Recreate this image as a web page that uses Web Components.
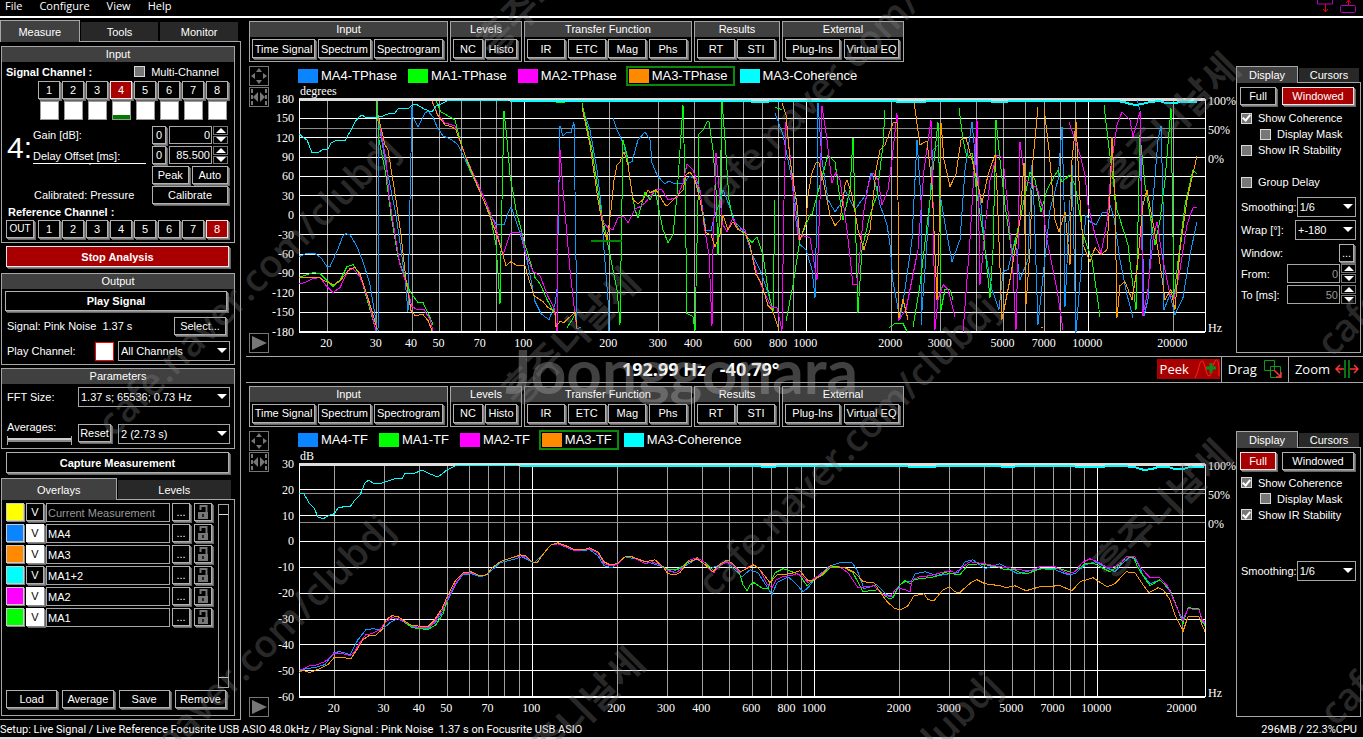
<!DOCTYPE html>
<html lang="en">
<head>
<meta charset="utf-8">
<meta name="viewport" content="width=device-width, initial-scale=1">
<title>Acoustic Analyzer</title>
<style>
html,body{margin:0;background:#000;color:#fff}
body{font:11px/14px "Liberation Sans",Arial,sans-serif;position:relative;--line:#a6a6a6;--red:#a80000}
</style>
</head>
<body>
<analyzer-app></analyzer-app>
<script>
const define = (name, css, html, setup) => {
  const tpl = document.createElement('template');
  tpl.innerHTML = `<style>*{box-sizing:border-box}:host{box-sizing:border-box;white-space:nowrap}${css}</style>${html}`;
  customElements.define(name, class extends HTMLElement {
    constructor() {
      super();
      this.attachShadow({mode: 'open'}).append(tpl.content.cloneNode(true));
    }
    connectedCallback() {
      if (setup && !this.ready) { this.ready = true; setup(this, this.shadowRoot); }
    }
  });
};

/* ---------- small controls ---------- */
define('push-button', `
:host{display:block;height:18px;margin:0}
button{display:flex;align-items:center;justify-content:center;width:100%;height:100%;padding:0;margin:0;font:inherit;color:#fff;background:#000;border:1px solid #b0b0b0;border-radius:0;box-shadow:1px 1px 0 #8a8a8a,2px 2px 0 #666;white-space:nowrap}
:host([on]) button{background:var(--red);border-color:#f4e4e4}
:host([lit]) button{background:#fff;color:#000;border-color:#fff}
:host([strong]) button{font-weight:bold}`,
`<button type="button"><slot></slot></button>`,
(el, root) => { if (el.title) root.querySelector('button').setAttribute('aria-label', el.title); });

define('group-box', `
:host{display:block;border:1px solid var(--line)}
h2{margin:0;height:15px;font:inherit;line-height:15px;text-align:center;background:#404040}`,
`<h2><slot name="title"></slot></h2><slot></slot>`);

define('tab-strip', `
:host{display:flex;align-items:flex-end;position:relative;z-index:1;margin-bottom:-1px}
::slotted(button){flex:1;height:19px;margin:0 1px 1px;padding:0;border:0;background:#282828;color:#fff;font:inherit}
::slotted(button[aria-selected=true]){height:22px;margin:0;background:#404040;border:1px solid var(--line);border-bottom:0}`,
`<slot></slot>`);

define('drop-down', `
:host{display:block;position:relative;height:20px}
::slotted(select){appearance:none;width:100%;height:100%;margin:0;padding:0 0 0 2px;border:1px solid var(--line);border-radius:0;background:#000;color:#fff;font:inherit}
i{position:absolute;right:3px;top:7px;border:5px solid transparent;border-top-color:#fff;border-bottom:0;pointer-events:none}`,
`<slot></slot><i></i>`);

define('spin-box', `
:host{display:flex;gap:1px;height:19px}
::slotted(input){flex:1;width:100%;min-width:0;height:100%;box-sizing:border-box;margin:0;padding:0 1px;border:1px solid var(--line);border-radius:0;background:#000;color:inherit;font:inherit;text-align:right}
div{width:15px;display:grid;grid-template-rows:1fr 1fr;gap:1px;flex:none}
button{display:flex;align-items:center;justify-content:center;padding:0;border:1px solid #777;background:#000}
i{border:5px solid transparent;border-bottom-color:#fff;border-top:0}
button+button i{border:5px solid transparent;border-top-color:#fff;border-bottom:0}`,
`<slot></slot><div><button type="button" aria-label="Up"><i></i></button><button type="button" aria-label="Down"><i></i></button></div>`);

define('check-box', `
:host{display:block;height:16px}
label{display:flex;align-items:center;gap:6px;height:100%}
input{appearance:none;width:11px;height:11px;margin:0;border:1px solid #d8d8d8;background:#777;display:grid;place-items:center}
input:checked::before{content:"";width:3px;height:6px;margin-top:-2px;border:solid #fff;border-width:0 2px 2px 0;transform:rotate(40deg)}`,
`<label><input type="checkbox"><span><slot></slot></span></label>`,
(el, root) => { root.querySelector('input').checked = el.hasAttribute('checked'); });

/* ---------- menu and status ---------- */
define('menu-bar', `
:host{display:block;height:18px;border-bottom:2px solid #fff;font:11px/12px "Open Sans","Noto Sans",sans-serif}
nav{display:flex;justify-content:space-between;padding:0 7px 0 5px}
div{display:flex;gap:17px}
.win{gap:7px}
a{color:#fff;text-decoration:none}
svg{display:block}`,
`<nav><div><a href="#file">File</a><a href="#configure">Configure</a><a href="#view">View</a><a href="#help">Help</a></div>
<div class="win">
<svg width="16" height="14" fill="none"><path d="M.5 0V4H15.500V0" stroke="#b000c0"/><path d="M8.500 4V12M6 9l2.500 3L11 9" stroke="#e00020"/></svg>
<svg width="16" height="14" fill="none"><rect x=".5" y="5.500" width="15" height="7" rx="1" stroke="#b000c0"/><path d="M8.500 5V0M6 3l2.500-3L11 3" stroke="#e00020"/></svg>
</div></nav>`);

define('status-bar', `
:host{display:flex;justify-content:space-between;height:19px;padding:2px 6px 0 0;font:11px/16px Roboto,"Noto Sans",sans-serif;border-bottom:2px solid #ddd}
span{white-space:pre}`,
`<span>Setup: Live Signal / Live Reference Focusrite USB ASIO 48.0kHz / Play Signal : Pink Noise  1.37 s on Focusrite USB ASIO</span><span>296MB / 22.3%CPU</span>`);

/* ---------- overlay list ---------- */
define('overlay-row', `
:host{display:flex;height:19px;gap:2px;min-width:0}
.sw{width:18px;height:18px;background:var(--c);border:1px solid #ccc;box-shadow:1px 1px 0 #888}
.v{width:18px}
.m{width:18px;margin-right:2px}
.l{width:18px}
input{flex:1;width:0;min-width:0;height:19px;border:1px solid var(--line);background:#000;color:#fff;font:inherit;padding:0 1px;margin:0}
:host([dim]) input{color:#999}
svg{display:block}`,
`<span class="sw"></span><push-button class="v">V</push-button><input aria-label="Overlay name"><push-button class="m" title="More">...</push-button><push-button class="l" title="Lock"><svg width="14" height="16" fill="none"><path d="M4.500 6V2h6v6" stroke="#777" stroke-width="2"/><rect x="2" y="8" width="10" height="7" fill="#777"/><path d="M7 10v3" stroke="#222" stroke-width="2"/></svg></push-button>`,
(el, root) => {
  root.querySelector('input').value = el.getAttribute('name');
  root.querySelector('.v').toggleAttribute('lit', el.hasAttribute('shown'));
});

/* ---------- side panel ---------- */
const channels = on => [1,2,3,4,5,6,7,8].map(n => `<push-button class="ch"${n === on ? ' on' : ''}>${n}</push-button>`).join('');
define('side-panel', `
:host{display:flex;flex-direction:column;width:241px;flex:none;padding-top:2px}
.main{flex:1;display:flex;flex-direction:column;border:solid var(--line);border-width:1px 1px 1px 0;padding:4px 5px 3px 1px}
tab-strip.top{padding-right:2px}
.row{display:flex;align-items:center}
.head{height:19px;padding:0 15px 0 4px;justify-content:space-between}
.chans{gap:2px}
.ch{width:22px}
.sig{padding-left:36px}
.meters{gap:5px;padding-left:38px;margin-top:2px}
.meters i{width:19px;height:19px;background:#fff;border:1px solid #999}
.meters i.live{background:linear-gradient(#fff 13px,#007c00 13px)}
.gain{display:grid;grid-template-columns:31px 1fr 76px;grid-auto-rows:18px;gap:2px 0;padding-right:6px;margin-top:6px;align-items:center}
.big{grid-row:1/4;font-size:30px;line-height:36px;padding:0 0 14px 5px}
.set{display:flex;gap:3px;grid-column:3}
.set push-button{flex:1}
.set .z{flex:none;width:14px}
.set spin-box{flex:1;height:18px}
.delay{grid-column:2;width:113px;border-bottom:1px solid #fff;margin-top:2px;position:relative}
.delay::after{content:"";position:absolute;left:55px;top:14px;border:2px solid transparent;border-top-color:#fff}
.cal{grid-column:2;padding-left:1px}
.ref{height:16px;padding:1px 6px 0}
.refs{padding:0 0 4px 4px}
.out{width:28px;margin-right:2px;font-size:10px}
.big-btn{height:21px;margin:3px 6px 0 5px}
.gb{margin-top:6px}
.play{height:20px;margin:2px 7px 0 3px}
.sel{height:19px;margin:5px 8px 0 5px;justify-content:space-between}
.sel push-button{width:52px}
.sel span{white-space:pre}
.pc{height:20px;margin:6px 4px 3px 5px}
.pc label{flex:1}
.pc i{width:19px;height:19px;border:1px solid #f00;background:#fff;margin-right:4px}
.pc drop-down{width:112px}
.gb2{margin-top:3px}
.fft{height:20px;margin:3px 4px 0 5px;justify-content:space-between}
.fft drop-down{width:152px}
.avg{height:20px;margin:17px 4px 4px 5px;align-items:flex-start}
.avg .lab{flex:1;margin-top:-4px}
.avg label{display:block}
.avg input{appearance:none;display:block;width:65px;height:9px;margin:2px 0 0;border:solid #aaa;border-width:0 1px;background:linear-gradient(transparent 2px,#ccc 2px 4px,#888 4px 6px,transparent 6px)}
.avg input::-webkit-slider-thumb{appearance:none;width:1px}
.avg push-button{width:33px;margin-right:7px}
.avg drop-down{width:112px}
.tabs2{margin-top:5px;padding-right:3px}
.list{flex:1;display:flex;flex-direction:column;border:1px solid var(--line);padding:3px 5px 7px 4px}
.rows{flex:1;display:flex;gap:6px}
.ov{flex:1;min-width:0;display:flex;flex-direction:column;gap:2px}
.bar{width:11px;flex:none;border:1px solid var(--line);margin:1px 0 2px;padding:9px 0;display:flex}
.bar i{flex:1;border:solid #ddd;border-width:1px 0}
.acts{display:grid;grid-template-columns:repeat(4,1fr);gap:5px;margin-right:3px}`,
`<tab-strip class="top" role="tablist"><button role="tab" aria-selected="true">Measure</button><button role="tab">Tools</button><button role="tab">Monitor</button></tab-strip>
<div class="main">
 <group-box><span slot="title">Input</span>
  <div class="row head"><b>Signal Channel :</b><check-box>Multi-Channel</check-box></div>
  <div class="row chans sig">${channels(4)}</div>
  <div class="row meters"><i></i><i></i><i></i><i class="live"></i><i></i><i></i><i></i><i></i></div>
  <div class="gain">
   <span class="big">4:</span><label for="gain">Gain [dB]:</label>
   <div class="set"><push-button class="z">0</push-button><spin-box><input id="gain" value="0"></spin-box></div>
   <label class="delay" for="delay">Delay Offset [ms]:</label>
   <div class="set"><push-button class="z">0</push-button><spin-box><input id="delay" value="85.500"></spin-box></div>
   <div class="set"><push-button>Peak</push-button><push-button>Auto</push-button></div>
   <span class="cal">Calibrated: Pressure</span><div class="set"><push-button>Calibrate</push-button></div>
  </div>
  <div class="ref"><b>Reference Channel :</b></div>
  <div class="row chans refs"><push-button class="out">OUT</push-button>${channels(8)}</div>
 </group-box>
 <push-button class="big-btn" strong on>Stop Analysis</push-button>
 <group-box class="gb"><span slot="title">Output</span>
  <push-button class="play" strong>Play Signal</push-button>
  <div class="row sel"><span>Signal: Pink Noise  1.37 s</span><push-button>Select...</push-button></div>
  <div class="row pc"><label for="pch">Play Channel:</label><i></i><drop-down><select id="pch"><option>All Channels</option></select></drop-down></div>
 </group-box>
 <group-box class="gb2"><span slot="title">Parameters</span>
  <div class="row fft"><label for="fft">FFT Size:</label><drop-down><select id="fft"><option>1.37 s; 65536; 0.73 Hz</option></select></drop-down></div>
  <div class="row avg"><div class="lab"><label for="avg">Averages:</label><input type="range" aria-label="Averages"></div><push-button>Reset</push-button><drop-down><select id="avg"><option>2 (2.73 s)</option></select></drop-down></div>
 </group-box>
 <push-button class="big-btn" strong>Capture Measurement</push-button>
 <tab-strip class="tabs2" role="tablist"><button role="tab" aria-selected="true">Overlays</button><button role="tab">Levels</button></tab-strip>
 <div class="list">
  <div class="rows"><div class="ov">
   <overlay-row name="Current Measurement" dim style="--c:#ff0"></overlay-row>
   <overlay-row name="MA4" shown style="--c:#0a84ff"></overlay-row>
   <overlay-row name="MA3" shown style="--c:#ff8a00"></overlay-row>
   <overlay-row name="MA1+2" style="--c:#0ff"></overlay-row>
   <overlay-row name="MA2" shown style="--c:#f0f"></overlay-row>
   <overlay-row name="MA1" shown style="--c:#0f0"></overlay-row>
  </div><div class="bar"><i></i></div></div>
  <div class="acts"><push-button>Load</push-button><push-button>Average</push-button><push-button>Save</push-button><push-button>Remove</push-button></div>
 </div>
</div>`);

/* ---------- curve data, in plot units ---------- */
const LOW = '310,666 315,666 325,662 334,654 342,654 350,656 354,653 360,643 366,635 372,634 380,630 386,622 392,618 398,619 404,622 412,626 420,628 428,628 434,623 442,611 448,598 456,583 463,574 471,573 480,576 487,575 492,568 500,562 512,558 520,556 526,557 532,562 537,563 545,552 551,545 558,544 566,547 575,551 583,550 590,549 598,553 604,564 610,566 617,565 625,557 632,557 640,561 645,564 652,562 660,565';
const PLOTS = {
  phase: {
    view: '299 99 906 233', lo: 1.2011, hi: 4.4138, unit: 'degrees', ys: [180,150,120,90,60,30,0,-30,-60,-90,-120,-150,-180],
    legend: [['MA4-TPhase','#0a84ff'],['MA1-TPhase','#0f0'],['MA2-TPhase','#f0f'],['MA3-TPhase','#ff8a00',1],['MA3-Coherence','#0ff']], active: 'Phs', pct: [1, 30, 59],
    curves: [
      ['#0a9aff', '299,257 306,254 315,254 321,258 327,267 330,267 338,249 343,236 346,234 350,235 357,247 363,262 370,285 375,315 377,331|378,331 379,120 380,130 385,160 391,190 396,215 401,250 405,280 408,312 410,200 412,107 413,117 418,127 425,113 428,111 433,117 437,127 443,136 452,140 458,145 463,155 472,175 485,200 492,218 497,225 504,225 508,213 511,207 514,215 520,233 527,260 530,275 535,302 541,314 546,318 549,320 555,305 557,290 560,126 563,136 566,133 571,133 574,122 575,190 577,329 581,328|582,107 590,130 597,170 601,205 604,250 608,300 609,331|613,118 617,130 624,145 628,163 632,162 638,140 645,132 650,140 652,163 657,175 661,180 665,184 669,181 675,184 683,184 690,176 695,180 700,193 706,231 711,231 714,218 719,205 723,190 727,200 735,222 745,233 752,255 760,270 767,290 773,310|775,113 783,135 793,185 800,245 806,250 812,270 815,298 817,200 818,103 822,160 828,200 835,212 840,205 845,190 855,210 862,200 866,195 871,173 875,182 880,205 887,225 890,245 893,282 900,320 905,290 912,240 917,140 921,200 921,325 930,200 933,150 938,145 941,200 946,230 952,262 960,240 965,170 972,122 976,165 981,205 985,250 992,290 999,310 1003,272 1008,270 1015,240 1020,280 1028,260 1032,165 1034,205 1038,325 1050,210 1058,180 1062,127 1064,200 1065,307 1070,200 1072,165 1076,333 1083,245 1086,215 1090,222 1096,225 1102,213 1107,213 1110,205 1114,218 1120,260 1127,295 1133,318|1137,100 1140,110 1142,200 1144,316 1148,300 1153,200 1158,140 1161,126 1163,200 1164,310 1170,295 1175,315 1183,298 1190,255 1197,222'],
      ['#0f0', '299,278 304,276 313,273 320,274 327,281 333,287 340,281 347,267 353,265 360,275 370,310 376,331|377,101 379,140 385,170 391,215 398,257 404,275 410,292 418,303 423,303 430,318 433,325|436,101 441,112 450,117 455,120 460,140 470,170 482,197 490,215 496,245 500,304 502,200 504,111 507,140 510,175 516,210 525,245 535,278 540,284 547,300 554,313|556,102 563,103 566,101|567,328 571,322 575,315|582,103 592,150 600,205 610,255 617,290 620,325 622,200 623,140 627,155 630,180 635,210 638,218 645,192 650,200 655,190 663,230 668,243 673,235 677,195 683,105 685,180 687,314 693,317 695,331 698,200 698,135 703,130 707,122 709,122 713,150 716,190 718,255 720,200 722,101 725,140 729,200 733,220 738,228 745,235 752,243 757,237 763,255 768,290 773,313 775,200 775,107 782,110|786,322 793,285 800,240 810,215 812,215 816,200 824,170 828,155 835,162 840,200 843,220 850,190 853,138 858,313 862,250 870,215 877,195 883,145 885,110|889,328 895,324 903,324 907,332|913,328 920,285 930,200 938,122 940,200 941,310 945,290 950,290 953,300|959,108 963,140 967,158 972,153 977,195 984,240 990,298 993,250 996,120 1000,160 1005,205 1012,255 1020,220 1030,172 1035,180 1041,212 1047,190 1058,170 1062,182 1070,175 1075,185 1083,235 1092,260 1100,317|1104,105 1108,140 1117,210 1128,245 1131,270 1136,310 1140,135 1145,185 1155,245 1160,220 1165,180 1171,108 1174,300 1177,270 1185,205 1193,170 1197,174'],
      ['#f0f', '299,284 305,283 313,279 320,278 326,286 333,293 340,288 348,271 353,269 360,277 368,300 376,331|378,115 386,160 389,196 395,235 400,265 406,283 412,307 417,310 424,310 430,320 433,331|432,101 438,115 445,123 455,126 458,136 465,155 475,178 485,200 495,225 503,255 508,240 511,233 517,233 521,232 526,255 533,272 540,276 548,297 554,308 557,331 557,250 560,150 563,190 570,270 575,315 577,329|582,107 590,145 598,200 603,222 608,228 613,230 618,218 624,217 628,223 635,209 640,207 645,203 650,197 655,190 662,190 668,200 677,198 683,183 687,164 693,170 700,190 704,225 709,255 712,326 713,250 716,153 720,200 723,225 727,232 733,218 738,230 745,230 751,250 757,275 765,295 772,308 777,308 782,331 784,200 786,122 790,155 795,215 799,240 803,236 810,238 817,280 820,200 822,106 827,140 832,183 836,172 840,180 847,230 853,285 857,285 864,210 869,182 873,173 878,180 882,205 888,190 892,160 897,113 898,200 899,320 906,310 910,290 918,250 924,170 931,120 933,200 935,330 938,300 943,285 948,290 955,317|963,333 970,240 977,120 980,285 985,230 990,180 997,155 1003,158 1007,200 1012,255 1016,330 1018,250 1020,142 1025,180 1037,188 1043,210 1047,240 1057,290 1063,330|1069,122 1075,140 1080,155 1085,175 1088,205 1095,235 1101,254 1107,222 1112,160 1117,125 1122,112 1130,120 1133,137 1140,112 1142,250 1143,316 1148,290 1153,240 1157,222 1162,255 1170,295 1174,300 1180,270 1187,225 1193,208 1197,208'],
      ['#ff9a00', '299,278 310,278 319,278 328,283 334,285 341,280 350,269 355,268 360,274 370,305 377,329|378,115 385,145 388,150 396,200 401,235 406,280 411,311 415,316 423,315 428,321 432,331|432,101 437,114 445,125 452,127 456,130 465,155 475,180 485,204 492,222 500,245 506,266 511,262 517,266 525,266 529,280 534,296 543,302 548,308 555,312 556,327 560,322 564,323 568,319 575,313 577,328|582,107 590,145 598,200 604,232 607,240 611,210 614,180 617,165 620,162 624,152 628,165 633,200 638,204 643,200 648,190 650,193 656,190 665,205 667,206 675,198 683,190 686,175 690,172 695,180 700,200 706,233 711,235 715,247 720,235 723,215 728,230 733,222 738,230 745,233 750,245 756,275 762,285 768,306 772,310 779,330|782,103 786,115 790,160 797,205 800,240 806,222 808,195 812,173 816,163 819,163 823,180 830,215 835,226 840,220 845,185 847,180 852,195 858,230 864,250 870,230 876,170 880,150 885,145 893,123 897,122 898,200 899,318 903,300 908,320|911,103 914,102 920,145 927,141 932,185 937,300 940,200 941,123 944,160 950,187 956,174 961,140 966,138 972,160 982,203 988,175 995,155 997,190 1002,320 1010,280 1020,220 1024,163 1026,305 1030,250 1033,160 1038,107|1044,108 1049,150 1055,220 1059,232 1065,212 1070,265 1072,160 1076,122 1080,200 1083,245 1090,262 1095,248 1101,255 1107,250 1110,195 1112,137 1115,200 1117,318 1120,286 1125,282 1132,300 1137,270 1143,205 1147,190 1152,218 1158,250 1165,300 1171,290 1175,310 1180,250 1187,200 1197,156|1041,328 1043,328'],
      ['#008a00', '591,241 622,241', 2],
      ['#0ff', '299,134 304,138 307,140 312,153 318,153 322,150 328,149 331,143 335,141 345,141 351,130 355,122 359,117 362,115 366,118 376,118 383,116 388,114 394,114 398,109 408,109 412,105 416,104 424,109 432,112 436,106 441,104 447,101 508,101'],
      ['#0ff', '510,101 750,101 752,102 768,102 770,101 895,101 898,102 925,102 927,101 990,101 992,102 1007,102 1009,101 1115,101 1124,102 1130,104 1136,105 1142,104 1150,102 1160,101 1165,103 1175,103 1180,102 1197,102', 2]
    ]
  },
  mag: {
    view: '299 464 906 233', lo: 1.1745, hi: 4.3808, unit: 'dB', ys: [30,20,10,0,-10,-20,-30,-40,-50,-60],
    legend: [['MA4-TF','#0a84ff'],['MA1-TF','#0f0'],['MA2-TF','#f0f'],['MA3-TF','#ff8a00',1],['MA3-Coherence','#0ff']], active: 'Mag', pct: [1, 30, 59],
    curves: [
      ['#0a9aff', '299,673 306,669 315,668 325,665 334,653 340,652 350,655 358,640 366,630 374,629 381,631 390,623 398,619 412,627 428,629 436,622 443,612 448,600 456,584 463,575 471,574 480,577 487,575 500,563 512,560 522,557 534,563 545,552 551,545 558,544 575,551 590,550 598,556 604,566 612,568 625,557 640,560 660,566 672,572 682,568 697,559 710,569 727,562 742,577 750,570 758,573 767,587 772,595 777,583 788,577 795,583 803,592 808,588 815,579 830,566 840,563 852,563 857,570 864,589 877,585 887,595 893,597 900,585 905,582 911,582 915,574 925,572 937,576 950,574 958,573 965,562 973,560 985,569 1000,564 1010,570 1018,574 1030,571 1042,569 1055,570 1068,575 1075,574 1085,565 1095,562 1105,567 1115,572 1122,564 1130,557 1136,560 1143,575 1150,584 1160,580 1170,591 1176,606 1183,620 1188,609 1199,609 1202,621 1205,625'],
      ['#0f0', '299,671 306,668 ' + LOW.replace('412,626 420,628 428,628 434,623 442,611', '412,628 420,629 428,630 436,625 443,614') + ' 668,570 676,570 682,567 690,560 697,558 704,562 714,571 725,562 733,564 740,575 743,585 747,591 750,585 754,583 763,589 768,589 770,583 775,573 783,569 795,573 800,576 807,586 815,579 823,575 830,568 845,568 853,573 863,592 878,590 889,599 893,598 898,587 905,581 910,584 914,580 920,579 935,577 945,573 960,575 968,565 980,564 997,567 1005,570 1015,570 1020,573 1027,574 1040,569 1060,569 1073,573 1085,564 1095,564 1100,567 1110,572 1120,565 1126,557 1134,558 1137,566 1143,576 1150,586 1160,580 1170,590 1176,605 1183,624 1188,608 1199,609 1202,622 1205,626'],
      ['#f0f', '299,671 304,669 ' + LOW + ' 668,571 676,573 682,569 690,560 697,558 704,562 710,570 714,573 719,566 727,562 733,565 740,573 748,567 754,565 760,570 767,584 772,588 776,580 783,577 790,576 797,574 803,577 808,583 815,578 823,573 830,567 840,567 848,573 858,588 865,587 874,586 882,594 890,597 897,588 905,590 910,592 912,580 920,577 930,576 945,572 950,571 955,573 963,567 970,562 985,564 1000,567 1010,568 1020,570 1030,571 1040,567 1055,567 1068,574 1075,572 1082,563 1090,559 1100,563 1107,568 1115,567 1122,562 1126,557 1135,557 1140,567 1150,578 1160,578 1168,587 1174,601 1180,615 1183,621 1188,609 1199,610 1202,620 1205,623'],
      ['#ff9a00', '299,671 304,671 310,673 320,669 328,665 334,658 342,658 351,659 357,650 363,640 369,636 375,636 382,630 386,620 392,616 398,617 404,621 412,626 428,627 434,621 442,609 448,595 456,580 463,573 471,572 480,576 487,575 492,568 500,562 512,558 520,555 526,556 532,562 537,563 545,552 551,545 558,543 566,546 575,550 583,550 590,548 598,552 604,562 610,565 617,564 625,557 632,557 640,560 645,562 655,560 663,567 668,574 675,575 680,573 687,563 697,559 704,564 713,572 718,566 727,560 733,564 741,572 748,568 754,565 760,570 770,583 777,575 790,574 800,571 808,581 815,580 823,574 830,566 845,568 855,573 863,582 874,583 880,592 887,602 895,609 901,610 908,606 914,596 924,594 928,600 934,601 943,590 950,587 955,592 960,593 965,588 972,582 977,580 985,584 1000,586 1006,588 1015,586 1026,591 1040,587 1060,586 1072,591 1080,582 1093,578 1107,587 1115,584 1126,572 1135,573 1143,585 1149,593 1158,588 1163,590 1170,600 1175,615 1180,625 1183,632 1188,617 1199,617 1202,625 1205,632'],
      ['#0ff', '299,493 304,494 309,503 314,508 318,517 323,519 330,515 334,514 338,508 343,507 350,507 355,500 360,495 365,483 369,480 374,484 382,483 391,480 398,478 402,479 405,473 413,474 422,470 430,474 438,477 447,470 455,466 518,466'],
      ['#0ff', '520,466 760,466 762,467 775,467 777,466 907,466 909,467 935,467 937,466 1000,466 1002,467 1014,467 1016,466 1060,466 1090,467 1120,466 1135,467 1140,469 1145,470 1152,469 1158,467 1168,467 1175,469 1183,469 1190,467 1204,467', 2]
    ]
  }
};

/* Log-frequency plot: grid and labels sit at percentages, curves scale with the box. */
define('freq-plot', `
:host{display:block;min-height:0}
svg{display:block;width:100%;height:100%;overflow:visible;font:12px "Liberation Serif","Times New Roman",serif;fill:#fff}
svg svg{fill:none}
line,path{shape-rendering:crispEdges;vector-effect:non-scaling-stroke}`,
`<svg role="img" aria-label="Frequency plot"></svg>`,
(el, root) => {
  const p = PLOTS[el.getAttribute('kind')];
  const px = f => ((Math.log10(f) - p.lo) / (p.hi - p.lo) * 100).toFixed(2) + '%';
  const H = 233;
  let s = '';
  for (const v of p.pct) s += `<line x1="0" x2="100%" y1="${(v / H * 100).toFixed(2)}%" y2="${(v / H * 100).toFixed(2)}%" stroke="#8c8c8c"/>`;
  for (const d of [10, 100, 1000, 10000]) for (let k = 2; k < 10; k++) {
    const f = d * k;
    if (f > 20000) continue;
    s += `<line x1="${px(f)}" x2="${px(f)}" y1="0" y2="100%" stroke="#a0a0a0"/>`;
  }
  p.ys.forEach((v, i) => {
    const y = (i / (p.ys.length - 1) * 100).toFixed(2) + '%';
    s += `<line x1="0" x2="100%" y1="${y}" y2="${y}" stroke="#fff"/><text x="-5" y="${y}" dy="4" text-anchor="end">${v}</text>`;
  });
  for (const f of [100, 1000, 10000]) s += `<line x1="${px(f)}" x2="${px(f)}" y1="0" y2="100%" stroke="#fff"/>`;
  s += `<line x1="0" x2="100%" y1="0" y2="0" stroke="#ddd" stroke-width="3"/><line x1="0" x2="100%" y1="100%" y2="100%" stroke="#fff" stroke-width="2"/><line x1="0" x2="0" y1="0" y2="100%" stroke="#fff"/><line x1="100%" x2="100%" y1="0" y2="100%" stroke="#fff"/>`;
  s += `<svg width="100%" height="100%" viewBox="${p.view}" preserveAspectRatio="none">` + p.curves.map(([c, d, w = 1]) =>
    `<path stroke="${c}" stroke-width="${w}" d="${d.split('|').map(t => 'M' + t).join('')}"/>`).join('') + '</svg>';
  for (const f of [20,30,40,50,70,100,200,300,400,600,800,1000,2000,3000,5000,7000,10000,20000])
    s += `<text x="${px(f)}" dx="-1" y="100%" dy="15" text-anchor="middle">${f}</text>`;
  s += `<text x="1" y="-4">${p.unit}</text><text x="100%" dx="3" y="100%" dy="0">Hz</text>`;
  ['100%', '50%', '0%'].forEach((t, i) => s += `<text x="100%" dx="3" y="${(p.pct[i] / H * 100).toFixed(2)}%" dy="5">${t}</text>`);
  root.querySelector('svg').innerHTML = s;
});

/* ---------- tool groups ---------- */
const GROUPS = [
  ['Input', 199, [['Time Signal', 63], ['Spectrum', 53], ['Spectrogram', 69]]],
  ['Levels', 72, [['NC', 30], ['Histo', 32]]],
  ['Transfer Function', 168, [['IR', 38], ['ETC', 38], ['Mag', 38], ['Phs', 38]]],
  ['Results', 86, [['RT', 38], ['STI', 38]]],
  ['External', 122, [['Plug-Ins', 55], ['Virtual EQ', 55]]]
];
define('tool-groups', `
:host{display:flex;gap:2px}
group-box{height:41px}
.b{display:flex;justify-content:space-between;padding:2px 4px 0 2px}
push-button{height:19px}`,
``,
(el, root) => {
  const on = el.getAttribute('active');
  for (const [title, w, items] of GROUPS) {
    const g = document.createElement('group-box');
    g.style.width = w + 'px';
    g.innerHTML = `<span slot="title">${title}</span><div class="b">${items.map(([t, bw]) => `<push-button style="width:${bw}px"${t === on ? ' on' : ''}>${t}</push-button>`).join('')}</div>`;
    root.append(g);
  }
});

/* ---------- display settings ---------- */
define('display-panel', `
:host{display:flex;flex-direction:column;width:125px}
tab-strip{padding-right:1px}
tab-strip button{height:14px}
tab-strip button[aria-selected=true]{height:17px}
.box{flex:1;border:1px solid var(--line);padding:4px 4px 0 3px}
.modes{display:flex;gap:6px;margin-bottom:5px;padding-right:2px}
.full{width:36px}
.win{flex:1}
check-box{margin-left:1px}
.in{margin-left:20px}
.gap{margin-top:16px}
.spacer{height:32px}
.f{display:flex;align-items:center;justify-content:space-between;height:21px;margin-top:2px;padding-left:1px}
.f.first{margin-top:6px}
.f drop-down{width:61px}
.w push-button{width:15px;margin-right:2px}
.f spin-box{width:69px;color:#999}
.f.n{margin-top:0}`,
`<tab-strip role="tablist"><button role="tab" aria-selected="true">Display</button><button role="tab">Cursors</button></tab-strip>
<div class="box"></div>`,
(el, root) => {
  const phase = el.getAttribute('kind') === 'phase';
  root.querySelector('.box').innerHTML = `
  <div class="modes"><push-button class="full"${phase ? '' : ' on'}>Full</push-button><push-button class="win"${phase ? ' on' : ''}>Windowed</push-button></div>
  <check-box checked>Show Coherence</check-box><check-box class="in">Display Mask</check-box><check-box${phase ? '' : ' checked'}>Show IR Stability</check-box>
  ${phase ? '<check-box class="gap">Group Delay</check-box>' : '<div class="spacer"></div>'}
  <div class="f first"><label for="sm">Smoothing:</label><drop-down><select id="sm"><option>1/6</option></select></drop-down></div>
  ${phase ? `<div class="f"><label for="wr">Wrap [°]:</label><drop-down><select id="wr"><option>+-180</option></select></drop-down></div>
  <div class="f w"><span>Window:</span><push-button title="Window settings">...</push-button></div>
  <div class="f n"><label for="from">From:</label><spin-box><input id="from" value="0"></spin-box></div>
  <div class="f n"><label for="to">To [ms]:</label><spin-box><input id="to" value="50"></spin-box></div>` : ''}`;
});

/* ---------- one plot with its tools ---------- */
define('plot-panel', `
:host{display:flex;flex-direction:column;flex:1;padding:3px 2px 3px 3px;min-width:0}
.body{flex:1;display:grid;grid-template-columns:19px minmax(0,1fr) auto;margin-top:4px}
.icons{display:flex;flex-direction:column;gap:1px}
.icons button{width:20px;height:20px;padding:0;border:1px solid #777;background:#000}
.icons button:last-child{margin-top:auto}
.icons svg{display:block}
.mid{display:flex;flex-direction:column;margin:0 31px 0 31px}
.legend{display:flex;align-items:center;height:19px;gap:7px;font-size:13px;margin-left:-3px}
.legend span{display:flex;align-items:center;gap:3px;height:20px;padding:0 2px;border:2px solid transparent;border-left-width:0;border-right-width:0}
.legend span.sel{border:2px solid #0a8a0a;padding:0 5px 0 1px;margin-right:-4px}
.legend i{width:20px;height:14px}
freq-plot{flex:1;margin:14px 0 21px}`,
`<tool-groups></tool-groups>
<div class="body">
 <div class="icons">
  <button type="button" aria-label="Auto scale"><svg width="18" height="18" fill="#777"><path d="M9 1l3 4H6zM9 17l3-4H6zM1 9l4-3v6zM17 9l-4-3v6z"/></svg></button>
  <button type="button" aria-label="Fit width"><svg width="18" height="18" fill="#777"><path d="M8 4v10L3 9zM10 4v10l5-5zM1 1h2v4H1zM1 7h2v4H1zM1 13h2v4H1zM15 1h2v4h-2zM15 7h2v4h-2zM15 13h2v4h-2z"/></svg></button>
  <button type="button" aria-label="Play"><svg width="18" height="18" fill="#777"><path d="M2 2l15 7-15 7z"/></svg></button>
 </div>
 <div class="mid"><div class="legend"></div></div>
</div>`,
(el, root) => {
  const kind = el.getAttribute('kind'), p = PLOTS[kind];
  root.querySelector('tool-groups').setAttribute('active', p.active);
  root.querySelector('.legend').innerHTML = p.legend.map(([t, c, sel]) => `<span${sel ? ' class="sel"' : ''}><i style="background:${c}"></i>${t}</span>`).join('');
  root.querySelector('.mid').insertAdjacentHTML('beforeend', `<freq-plot kind="${kind}"></freq-plot>`);
  root.querySelector('.body').insertAdjacentHTML('beforeend', `<display-panel kind="${kind}"></display-panel>`);
});
customElements.whenDefined('tool-groups');

/* ---------- readout bar ---------- */
define('readout-bar', `
:host{display:grid;grid-template-columns:1fr auto 1fr;align-items:center;height:27px;border:solid var(--line);border-width:1px 0;font:13px/20px "Open Sans",sans-serif}
output{grid-column:1;justify-self:end;margin-right:25px;font:bold 18px/20px "Noto Sans",sans-serif;white-space:pre}
.t{grid-column:3;justify-self:end;display:flex;height:100%}
button{display:flex;align-items:center;gap:5px;height:20px;margin:2px 1px 0;padding:0 3px;border:0;background:none;color:#fff;font:inherit}
.on{background:var(--red);padding-right:0}
span{border-left:1px solid var(--line);padding-left:2px}`,
`<output>192.99 Hz   -40.79°</output>
<div class="t"><button class="on" type="button">Peek<svg width="26" height="20" fill="none"><path d="M1 19C5 12 5 2 8 2s4 15 7 15S19 2 22 1s3 8 3 16" stroke="#f22"/><path d="M17 4v10M12 9h10" stroke="#0a8a1a" stroke-width="3"/></svg></button>
<span><button type="button">Drag<svg width="22" height="20" fill="none"><path d="M2.500 1.500h10v10h-10zM8.500 7.500h10v11h-10z" stroke="#0a9a1a"/><path d="M12 11l7 7M19 13v5h-5" stroke="#f33" stroke-width="1.500"/></svg></button></span>
<span><button type="button">Zoom<svg width="24" height="20" fill="none"><path d="M10 1v18M14 1v18" stroke="#0a9a1a" stroke-width="1.500"/><path d="M9 10H2M5 6l-4 4 4 4M15 10h7M19 6l4 4-4 4" stroke="#f33" stroke-width="1.500"/></svg></button></span></div>`);

/* ---------- watermark layer ---------- */
define('water-mark', `
:host{position:absolute;inset:0;overflow:hidden;pointer-events:none;color:rgba(128,128,128,.32);font:600 38px/40px "Open Sans","Noto Sans CJK KR",sans-serif;z-index:5}
span{position:absolute;transform:rotate(-45deg);transform-origin:0 50%}
b{position:absolute;left:50%;top:334px;transform:translateX(-50%);font:bold 62px/72px Lato,sans-serif;color:rgba(170,170,170,.38)}`,
`<b>Joonggonara</b>`,
(el, root) => {
  const a = 'cafe.naver.com/clubdj', k = '흥주니날세';
  for (const [t, x, y] of [[a,103,428],[k,483,48],[a,98,808],[k,508,398],[a,703,203],[k,513,778],[a,703,588],[k,1108,183],[a,705,965],[k,1100,570],[a,1322,348],[a,1325,717]]) {
    const s = document.createElement('span');
    s.textContent = t;
    s.style.left = x + 'px';
    s.style.top = (y - 20) + 'px';
    root.append(s);
  }
});

define('analyzer-app', `
:host{display:flex;flex-direction:column;min-height:100vh;position:relative}
main{flex:1;display:flex}
section{flex:1;min-width:0;display:flex;flex-direction:column;margin-left:5px}`,
`<menu-bar></menu-bar>
<main><side-panel></side-panel><section><plot-panel kind="phase"></plot-panel><readout-bar></readout-bar><plot-panel kind="mag"></plot-panel></section></main>
<status-bar></status-bar><water-mark aria-hidden="true"></water-mark>`);
</script>
</body>
</html>
